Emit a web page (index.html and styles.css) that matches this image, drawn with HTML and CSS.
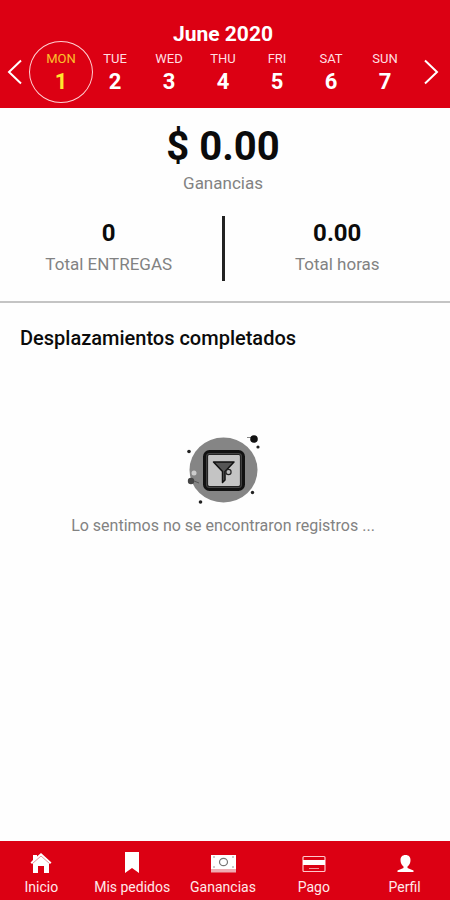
FILE: index.html
```html
<!DOCTYPE html>
<html lang="es">
<head>
<meta charset="utf-8">
<meta name="viewport" content="width=device-width, initial-scale=1">
<title>Ganancias</title>
<link rel="stylesheet" href="styles.css">
</head>
<body>
<div class="app">
  <header class="calendar">
    <h1 class="month">June 2020</h1>
    <div class="week">
      <button class="arrow" type="button" aria-label="Semana anterior">
        <svg width="16" height="26" viewBox="0 0 16 26"><path d="M14 1.5 2 13l12 11.500"/></svg>
      </button>
      <button class="day selected" type="button"><span class="name">MON</span><span class="number">1</span></button>
      <button class="day" type="button"><span class="name">TUE</span><span class="number">2</span></button>
      <button class="day" type="button"><span class="name">WED</span><span class="number">3</span></button>
      <button class="day" type="button"><span class="name">THU</span><span class="number">4</span></button>
      <button class="day" type="button"><span class="name">FRI</span><span class="number">5</span></button>
      <button class="day" type="button"><span class="name">SAT</span><span class="number">6</span></button>
      <button class="day" type="button"><span class="name">SUN</span><span class="number">7</span></button>
      <button class="arrow" type="button" aria-label="Semana siguiente">
        <svg width="16" height="26" viewBox="0 0 16 26"><path d="m2 1.500 12 11.500L2 24.500"/></svg>
      </button>
    </div>
  </header>

  <main>
    <section class="summary">
      <p class="total">$ 0.00</p>
      <p class="label">Ganancias</p>
      <div class="stats">
        <div class="stat"><p class="value">0</p><p class="label">Total ENTREGAS</p></div>
        <div class="divider"></div>
        <div class="stat"><p class="value">0.00</p><p class="label">Total horas</p></div>
      </div>
    </section>
    <section class="trips">
      <h2 class="heading">Desplazamientos completados</h2>
      <div class="empty">
        <svg width="74" height="72" viewBox="0 0 74 72" aria-hidden="true">
          <ellipse cx="37.500" cy="36" rx="34" ry="32.500" fill="#858585"/>
          <rect x="18.500" y="17.500" width="39" height="38" rx="5" fill="#444" stroke="#111" stroke-width="3"/>
          <rect x="21.500" y="20.500" width="33" height="32" rx="2" fill="#c4c4c4" stroke="#222" stroke-width="1.200"/>
          <path d="M27.500 28h20.500l-9 9.500V46l-2.500 2.500V37.500z" fill="#555" stroke="#111" stroke-width="1.500" stroke-linejoin="round"/>
          <circle cx="42.500" cy="38" r="2.600" fill="#bbb" stroke="#222" stroke-width="1.200"/>
          <path d="M61 3.500h5" stroke="#888"/>
          <circle cx="68" cy="5" r="3.800" fill="#111"/>
          <circle cx="72" cy="13" r="1.600" fill="#222"/>
          <circle cx="3" cy="17.500" r="1.800" fill="#222"/>
          <circle cx="66.500" cy="58.500" r="1.700" fill="#222"/>
          <circle cx="14.500" cy="68" r="1.800" fill="#222"/>
          <circle cx="8" cy="39" r="2.500" fill="#ccc"/>
          <circle cx="5" cy="47" r="3.200" fill="#444"/>
          <path d="m8 47 5 2" stroke="#555"/>
        </svg>
        <p class="message">Lo sentimos no se encontraron registros ...</p>
      </div>
    </section>
  </main>

  <nav class="tabs">
    <a class="tab" href="#inicio">
      <svg width="26" height="24" viewBox="0 0 26 24"><path fill="#fff" d="M13 2 9 5.500V4H5v5L2.500 11.500 4 13l1-.7V22h5v-7h6v7h5V12.300l1 .7 1.500-1.500z"/><path d="M4.500 12.500 13 5l8.500 7.500" fill="none" stroke="#dd7480" stroke-width=".8"/></svg>
      Inicio
    </a>
    <a class="tab" href="#pedidos">
      <svg width="26" height="24" viewBox="0 0 26 24"><path fill="#fff" d="M6 1h14v21l-7-5-7 5z"/></svg>
      Mis pedidos
    </a>
    <a class="tab" href="#ganancias" aria-current="page">
      <svg width="26" height="24" viewBox="0 0 26 24"><path fill="#fff" d="M1 4h25v14H1z"/><path fill="#efacb2" d="M1 18h25v3.500H1z"/><ellipse cx="13.500" cy="11" rx="4" ry="3.700" fill="none" stroke="#777" stroke-width="1.200"/><path d="M3 6h2M22 6h2M3 16h2M22 16h2" stroke="#999"/></svg>
      Ganancias
    </a>
    <a class="tab" href="#pago">
      <svg width="26" height="24" viewBox="0 0 26 24"><rect x="2" y="5.500" width="22" height="15" rx="1" fill="none" stroke="#ffc7cb" stroke-width="1.200"/><path fill="#fff" d="M2 9h22v5H2z"/><path d="M8 17.500h10" stroke="#f0989f"/></svg>
      Pago
    </a>
    <a class="tab" href="#perfil">
      <svg width="26" height="24" viewBox="0 0 26 24"><path fill="#fff" d="M13.500 4c-3.500 0-5 2.300-5 5 0 3 1 5 3 6.500V17l-6 2.500V21h16v-1.500l-6-2.500v-1.500c2-1.500 3-3.500 3-6.500 0-2.700-1.500-5-5-5z"/></svg>
      Perfil
    </a>
  </nav>
</div>
</body>
</html>
```
FILE: styles.css
```css
* { box-sizing: border-box; }

body {
  margin: 0;
  background: #fefefe;
  color: #0b0b0b;
  font-family: Roboto, "Liberation Sans", sans-serif;
}

h1, h2, p { margin: 0; }

button {
  padding: 0;
  border: 0;
  background: none;
  color: inherit;
  font: inherit;
}

.app {
  display: flex;
  flex-direction: column;
  min-height: 100vh;
  overflow: hidden;
}

.calendar {
  padding: 24px 4px 5px 0;
  background: #dc0013;
  color: #fff;
}

.month {
  font-size: 21px;
  font-weight: 700;
  line-height: 20px;
  text-align: center;
}

.week {
  display: grid;
  grid-template-columns: 34px repeat(7, 1fr) 34px;
  align-items: center;
  margin-top: -3px;
}

.arrow {
  display: flex;
  justify-content: center;
  padding-right: 4px;
}

.arrow:last-child { padding: 0 0 0 4px; }

.arrow path {
  fill: none;
  stroke: #fff;
  stroke-width: 2;
}

.day {
  display: flex;
  flex-direction: column;
  align-items: center;
  justify-content: center;
  justify-self: center;
  width: 64px;
  height: 62px;
  margin: 0 -5px;
}

.selected {
  border: 1px solid #ffd0d3;
  border-radius: 50%;
  color: #ffe62e;
}

.name {
  color: #ffdfe1;
  font-size: 13px;
  line-height: 20px;
}

.selected .name { color: #fbc02c; }

.number {
  font-size: 22px;
  font-weight: 700;
  line-height: 26px;
}

.summary {
  padding: 17px 4px 20px 0;
  border-bottom: 2px solid #c4c4c4;
  text-align: center;
}

.total {
  font-size: 40px;
  font-weight: 700;
  line-height: 44px;
}

.label,
.message {
  color: #828282;
  font-size: 17px;
  line-height: 24px;
}

.label { margin-top: 2px; }

.stats {
  display: flex;
  margin-top: 21px;
}

.stat {
  flex: 1;
  padding-top: 3px;
}

.stat:first-child { padding-right: 4px; }
.stat:last-child { padding-left: 4px; }

.divider {
  width: 3px;
  height: 65px;
  background: #222;
}

.value {
  font-size: 24px;
  font-weight: 700;
  line-height: 28px;
}

.stat .label { margin-top: 5px; }

.trips { padding: 23px 4px 24px 0; }

.heading {
  padding-left: 20px;
  font-size: 20px;
  font-weight: 500;
  line-height: 24px;
}

.empty {
  display: flex;
  flex-direction: column;
  align-items: center;
  margin-top: 84px;
}

.message {
  margin-top: 8px;
  font-size: 16px;
}

.tabs {
  display: flex;
  margin: auto 0 0 -4px;
  padding: 10px 0 3px;
  background: #dc0013;
}

.tab {
  display: flex;
  flex: 1;
  flex-direction: column;
  align-items: center;
  gap: 2px;
  color: #ffe9ea;
  font-size: 14px;
  line-height: 20px;
  text-decoration: none;
}
```
